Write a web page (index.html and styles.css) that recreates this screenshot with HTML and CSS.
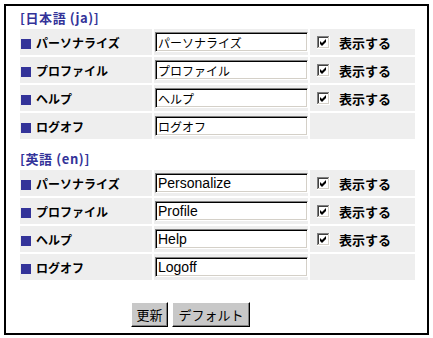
FILE: index.html
```html
<!DOCTYPE html>
<html lang="ja">
<head>
    <meta charset="UTF-8">
    <title>メニュー表示名</title>
    <link rel="stylesheet" href="styles.css">
</head>
<body>
    <div class="frame">
        <!-- Japanese labels -->
        <h2 class="lang-title">[日本語 (ja)]</h2>
        <table class="menu-table">
            <tr>
                <td class="label"><span class="bullet"></span>パーソナライズ</td>
                <td class="field"><input type="text" value="パーソナライズ"></td>
                <td class="show"><svg class="check" width="13" height="13" viewBox="0 0 13 13"><path d="M0 0h12v1H1v11H0z" fill="#808080"/><path d="M1 1h10v1H2v10H1z" fill="#404040"/><path d="M12 0h1v13H0v-1h12z" fill="#fff"/><path d="M11 1h1v11H1v-1h10z" fill="#d4d0c8"/><path d="M2 2h9v9H2z" fill="#fff"/><path d="M3 5l2 2 4-4v3l-4 4-2-2z" fill="#000"/></svg>表示する</td>
            </tr>
            <tr>
                <td class="label"><span class="bullet"></span>プロファイル</td>
                <td class="field"><input type="text" value="プロファイル"></td>
                <td class="show"><svg class="check" width="13" height="13" viewBox="0 0 13 13"><path d="M0 0h12v1H1v11H0z" fill="#808080"/><path d="M1 1h10v1H2v10H1z" fill="#404040"/><path d="M12 0h1v13H0v-1h12z" fill="#fff"/><path d="M11 1h1v11H1v-1h10z" fill="#d4d0c8"/><path d="M2 2h9v9H2z" fill="#fff"/><path d="M3 5l2 2 4-4v3l-4 4-2-2z" fill="#000"/></svg>表示する</td>
            </tr>
            <tr>
                <td class="label"><span class="bullet"></span>ヘルプ</td>
                <td class="field"><input type="text" value="ヘルプ"></td>
                <td class="show"><svg class="check" width="13" height="13" viewBox="0 0 13 13"><path d="M0 0h12v1H1v11H0z" fill="#808080"/><path d="M1 1h10v1H2v10H1z" fill="#404040"/><path d="M12 0h1v13H0v-1h12z" fill="#fff"/><path d="M11 1h1v11H1v-1h10z" fill="#d4d0c8"/><path d="M2 2h9v9H2z" fill="#fff"/><path d="M3 5l2 2 4-4v3l-4 4-2-2z" fill="#000"/></svg>表示する</td>
            </tr>
            <tr>
                <td class="label"><span class="bullet"></span>ログオフ</td>
                <td class="field"><input type="text" value="ログオフ"></td>
                <td class="show"></td>
            </tr>
        </table>

        <!-- English labels -->
        <h2 class="lang-title">[英語 (en)]</h2>
        <table class="menu-table">
            <tr>
                <td class="label"><span class="bullet"></span>パーソナライズ</td>
                <td class="field"><input type="text" class="latin" value="Personalize"></td>
                <td class="show"><svg class="check" width="13" height="13" viewBox="0 0 13 13"><path d="M0 0h12v1H1v11H0z" fill="#808080"/><path d="M1 1h10v1H2v10H1z" fill="#404040"/><path d="M12 0h1v13H0v-1h12z" fill="#fff"/><path d="M11 1h1v11H1v-1h10z" fill="#d4d0c8"/><path d="M2 2h9v9H2z" fill="#fff"/><path d="M3 5l2 2 4-4v3l-4 4-2-2z" fill="#000"/></svg>表示する</td>
            </tr>
            <tr>
                <td class="label"><span class="bullet"></span>プロファイル</td>
                <td class="field"><input type="text" class="latin" value="Profile"></td>
                <td class="show"><svg class="check" width="13" height="13" viewBox="0 0 13 13"><path d="M0 0h12v1H1v11H0z" fill="#808080"/><path d="M1 1h10v1H2v10H1z" fill="#404040"/><path d="M12 0h1v13H0v-1h12z" fill="#fff"/><path d="M11 1h1v11H1v-1h10z" fill="#d4d0c8"/><path d="M2 2h9v9H2z" fill="#fff"/><path d="M3 5l2 2 4-4v3l-4 4-2-2z" fill="#000"/></svg>表示する</td>
            </tr>
            <tr>
                <td class="label"><span class="bullet"></span>ヘルプ</td>
                <td class="field"><input type="text" class="latin" value="Help"></td>
                <td class="show"><svg class="check" width="13" height="13" viewBox="0 0 13 13"><path d="M0 0h12v1H1v11H0z" fill="#808080"/><path d="M1 1h10v1H2v10H1z" fill="#404040"/><path d="M12 0h1v13H0v-1h12z" fill="#fff"/><path d="M11 1h1v11H1v-1h10z" fill="#d4d0c8"/><path d="M2 2h9v9H2z" fill="#fff"/><path d="M3 5l2 2 4-4v3l-4 4-2-2z" fill="#000"/></svg>表示する</td>
            </tr>
            <tr>
                <td class="label"><span class="bullet"></span>ログオフ</td>
                <td class="field"><input type="text" class="latin" value="Logoff"></td>
                <td class="show"></td>
            </tr>
        </table>

        <!-- Buttons -->
        <div class="buttons">
            <button class="btn btn-update">更新</button>
            <button class="btn btn-default">デフォルト</button>
        </div>
    </div>
</body>
</html>
```

FILE: styles.css
```css
/* General reset */
* {
    margin: 0;
    padding: 0;
    box-sizing: border-box;
}

body {
    margin: 4px;
    background-color: #fff;
    color: #000;
    font-family: "Noto Sans CJK JP", "Liberation Sans", sans-serif;
    font-size: 12px;
}

/* Outer frame */
.frame {
    width: 425px;
    height: 331px;
    border: 2px solid #000;
    padding: 4px 0 0 12px;
}

/* Language heading */
.lang-title {
    font-size: 13px;
    font-weight: bold;
    line-height: 16px;
    letter-spacing: 0.6px;
    color: #333399;
    padding-left: 2px;
    margin-top: 10px;
}

.lang-title:first-child {
    margin-top: 0;
}

/* Menu table */
.menu-table {
    border-collapse: separate;
    border-spacing: 2px;
    margin-top: 1px;
}

.menu-table td {
    height: 26px;
    background-color: #eeeeee;
    vertical-align: middle;
}

.label {
    width: 132px;
    padding-left: 1px;
    font-weight: bold;
    font-size: 12px;
    white-space: nowrap;
}

.bullet {
    display: inline-block;
    width: 10px;
    height: 10px;
    background-color: #333399;
    margin-right: 5px;
    vertical-align: -1px;
}

.field {
    width: 154px;
    padding-left: 1px;
}

.field input {
    display: block;
    width: 153px;
    height: 20px;
    border: 1px solid;
    border-color: #808080 #fff #fff #808080;
    box-shadow: inset 1px 1px #000, inset -1px -1px #d4d0c8;
    background-color: #fff;
    padding: 0 2px;
    font-family: "Noto Sans CJK JP", "Liberation Sans", sans-serif;
    font-size: 12px;
    color: #000;
    outline: none;
}

.field input.latin {
    font-family: "Liberation Sans", Arial, sans-serif;
    font-size: 14px;
}

.show {
    width: 105px;
    padding-left: 7px;
    font-weight: bold;
    font-size: 13px;
    white-space: nowrap;
}

.check {
    display: inline-block;
    vertical-align: -1px;
    margin-right: 9px;
}

/* Buttons */
.buttons {
    display: flex;
    gap: 4px;
    margin-top: 20px;
    padding-left: 113px;
}

.btn {
    height: 25px;
    background-color: #c8c8c8;
    border: 1px solid;
    border-color: #fff #000 #000 #fff;
    box-shadow: inset -1px -1px #808080;
    font-family: "Noto Sans CJK JP", sans-serif;
    font-size: 13px;
    color: #000;
    cursor: pointer;
}

.btn-update {
    width: 37px;
}

.btn-default {
    width: 78px;
}
```
